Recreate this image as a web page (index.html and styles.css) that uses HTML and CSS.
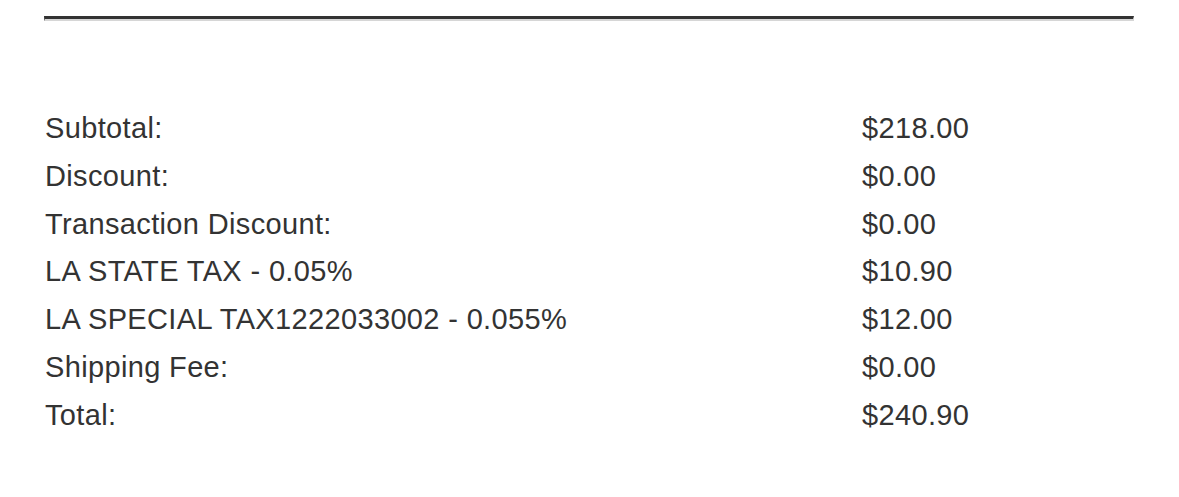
FILE: index.html
```html
<!DOCTYPE html>
<html>
<head>
<meta charset="utf-8">
<link rel="stylesheet" href="styles.css">
</head>
<body>
<div class="page">
  <div class="rule"></div>
  <div class="summary">
    <div class="row"><span class="label">Subtotal:</span><span class="value">$218.00</span></div>
    <div class="row"><span class="label">Discount:</span><span class="value">$0.00</span></div>
    <div class="row"><span class="label">Transaction Discount:</span><span class="value">$0.00</span></div>
    <div class="row"><span class="label">LA STATE TAX - 0.05%</span><span class="value">$10.90</span></div>
    <div class="row"><span class="label">LA SPECIAL TAX1222033002 - 0.055%</span><span class="value">$12.00</span></div>
    <div class="row"><span class="label">Shipping Fee:</span><span class="value">$0.00</span></div>
    <div class="row"><span class="label">Total:</span><span class="value">$240.90</span></div>
  </div>
</div>
</body>
</html>
```

FILE: styles.css
```css
html, body {
  margin: 0;
  padding: 0;
  background: #ffffff;
}
.page {
  padding: 16px 0 0 44px;
  width: 1090px;
  font-family: "Liberation Sans", Arial, sans-serif;
  color: #333333;
}
.rule {
  height: 0;
  border-top: 3px solid #333333;
  border-bottom: 2px solid #d6d6d6;
  border-left: 1px solid #555555;
  border-right: 1px solid #d6d6d6;
}
.summary {
  padding-top: 84px;
  padding-left: 1px;
}
.row {
  display: flex;
  font-size: 29px;
  letter-spacing: 0.35px;
  line-height: 47.8px;
  height: 47.8px;
}
.label {
  width: 817px;
  flex: none;
}
.value {
  flex: none;
}
```
